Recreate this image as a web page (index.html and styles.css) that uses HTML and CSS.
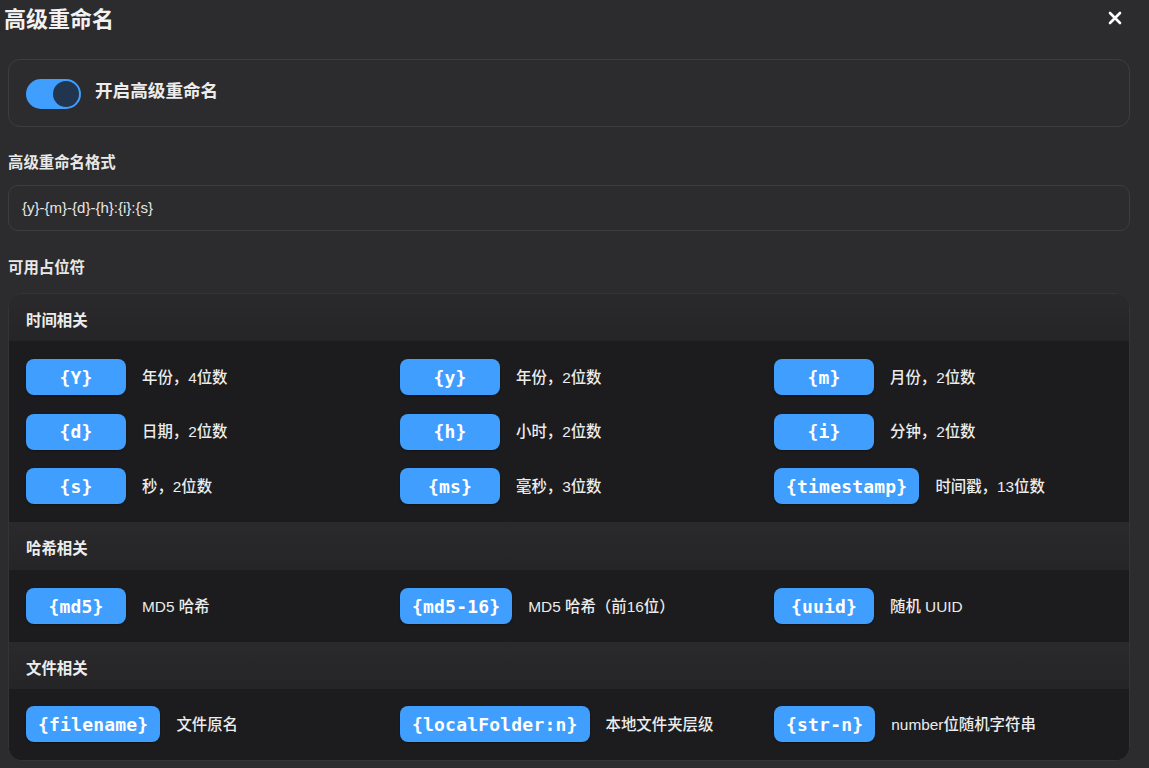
FILE: index.html
```html
<!DOCTYPE html>
<html lang="zh-CN">
<head>
<meta charset="utf-8">
<title>高级重命名</title>
<link rel="stylesheet" href="styles.css">
</head>
<body>
<div class="dialog">
  <header class="dlg-head">
    <h1 class="dlg-title">高级重命名</h1>
    <button class="close" aria-label="关闭">
      <svg width="14" height="14" viewBox="0 0 14 14"><path d="M2 2 L12 12 M12 2 L2 12" stroke="#fff" stroke-width="2.6" stroke-linecap="round"/></svg>
    </button>
  </header>
  <main class="content">
    <div class="card toggle-card">
      <span class="switch"><span class="knob"></span></span>
      <span class="toggle-label">开启高级重命名</span>
    </div>

    <div class="field-label">高级重命名格式</div>
    <div class="input">{y}-{m}-{d}-{h}:{i}:{s}</div>

    <div class="field-label gap2">可用占位符</div>
    <div class="panel">
      <div class="sec-head first">时间相关</div>
      <div class="sec-body">
        <div class="item"><span class="tag">{Y}</span><span class="desc">年份，4位数</span></div>
        <div class="item"><span class="tag">{y}</span><span class="desc">年份，2位数</span></div>
        <div class="item"><span class="tag">{m}</span><span class="desc">月份，2位数</span></div>
        <div class="item"><span class="tag">{d}</span><span class="desc">日期，2位数</span></div>
        <div class="item"><span class="tag">{h}</span><span class="desc">小时，2位数</span></div>
        <div class="item"><span class="tag">{i}</span><span class="desc">分钟，2位数</span></div>
        <div class="item"><span class="tag">{s}</span><span class="desc">秒，2位数</span></div>
        <div class="item"><span class="tag">{ms}</span><span class="desc">毫秒，3位数</span></div>
        <div class="item"><span class="tag">{timestamp}</span><span class="desc">时间戳，13位数</span></div>
      </div>
      <div class="sec-head">哈希相关</div>
      <div class="sec-body">
        <div class="item"><span class="tag">{md5}</span><span class="desc">MD5 哈希</span></div>
        <div class="item"><span class="tag">{md5-16}</span><span class="desc">MD5 哈希（前16位）</span></div>
        <div class="item"><span class="tag">{uuid}</span><span class="desc">随机 UUID</span></div>
      </div>
      <div class="sec-head short">文件相关</div>
      <div class="sec-body last">
        <div class="item"><span class="tag">{filename}</span><span class="desc">文件原名</span></div>
        <div class="item"><span class="tag">{localFolder:n}</span><span class="desc">本地文件夹层级</span></div>
        <div class="item"><span class="tag">{str-n}</span><span class="desc">number位随机字符串</span></div>
      </div>
    </div>
  </main>
</div>
</body>
</html>
```

FILE: styles.css
```css
* { box-sizing: border-box; }
html, body {
  margin: 0;
  padding: 0;
  background: #2c2c2e;
  color: #f0f0f0;
  font-family: "Liberation Sans", "Noto Sans CJK SC", sans-serif;
  height: 768px;
  overflow: hidden;
}
.dialog {
  width: 1149px;
}
.dlg-head {
  height: 34px;
  display: flex;
  align-items: center;
  justify-content: space-between;
  padding: 0 27px 0 4px;
}
.dlg-title {
  margin: 0;
  font-size: 22px;
  line-height: 28px;
  font-weight: 700;
  color: #f2f2f2;
  font-family: "Noto Sans CJK SC", sans-serif;
}
.close {
  background: none;
  border: 0;
  padding: 0;
  width: 14px;
  height: 14px;
  display: flex;
  margin-top: 2px;
}
.content {
  padding: 25px 19px 0 8px;
}
.card {
  border: 1px solid #3d3d40;
  border-radius: 12px;
}
.toggle-card {
  display: flex;
  align-items: center;
  padding: 0 17px;
  height: 68px;
}
.switch {
  width: 55px;
  height: 30px;
  border-radius: 15px;
  background: #409eff;
  display: flex;
  align-items: center;
  justify-content: flex-end;
  padding-right: 2px;
  margin-top: 1px;
}
.knob {
  width: 26px;
  height: 26px;
  border-radius: 50%;
  background: #22354f;
}
.toggle-label {
  margin-left: 14px;
  font-size: 17.6px;
  line-height: 24px;
  font-weight: 700;
  color: #ececec;
  font-family: "Noto Sans CJK SC", sans-serif;
  margin-bottom: 6px;
}
.field-label {
  margin-top: 24px;
  font-size: 15.4px;
  line-height: 20px;
  font-weight: 700;
  color: #e8e8e8;
  font-family: "Noto Sans CJK SC", sans-serif;
}
.input {
  margin-top: 14px;
  height: 46px;
  border: 1px solid #3d3d40;
  border-radius: 10px;
  padding: 0 13px 1px;
  display: flex;
  align-items: center;
  font-family: "Liberation Sans", sans-serif;
  font-size: 15px;
  color: #e6e6e6;
}
.field-label.gap2 {
  margin-top: 25px;
}
.panel {
  margin-top: 17px;
  border: 1px solid #343437;
  border-radius: 14px;
  overflow: hidden;
  background: #1c1c1e;
}
.sec-head {
  padding: 15px 17px 13px;
  line-height: 20px;
  font-size: 15.4px;
  font-weight: 700;
  color: #ededed;
  background: linear-gradient(180deg, #2a2a2c, #252527);
  font-family: "Noto Sans CJK SC", sans-serif;
  height: 48px;
}
.sec-head.first,
.sec-head.short {
  height: 47px;
  padding-bottom: 12px;
}
.sec-body {
  display: grid;
  grid-template-columns: repeat(3, 1fr);
  column-gap: 36px;
  row-gap: 18.5px;
  padding: 18px 17px 18px;
  background: #1c1c1e;
}
.sec-body.last {
  padding-top: 17px;
  padding-bottom: 18px;
}
.item {
  display: flex;
  align-items: center;
  gap: 16px;
  min-width: 0;
}
.tag {
  min-width: 100px;
  height: 36px;
  padding: 0 12px;
  border-radius: 8px;
  background: #409eff;
  color: #fff;
  font-family: "DejaVu Sans Mono", monospace;
  font-weight: 700;
  font-size: 18px;
  letter-spacing: 0.2px;
  display: inline-flex;
  align-items: center;
  justify-content: center;
  white-space: nowrap;
  box-shadow: 0 1px 2px rgba(0,0,0,0.35);
}
.desc {
  font-size: 15.4px;
  line-height: 20px;
  color: #ececec;
  font-weight: 500;
  white-space: nowrap;
  font-family: "Liberation Sans", "Noto Sans CJK SC", sans-serif;
  padding-top: 1px;
}
```
